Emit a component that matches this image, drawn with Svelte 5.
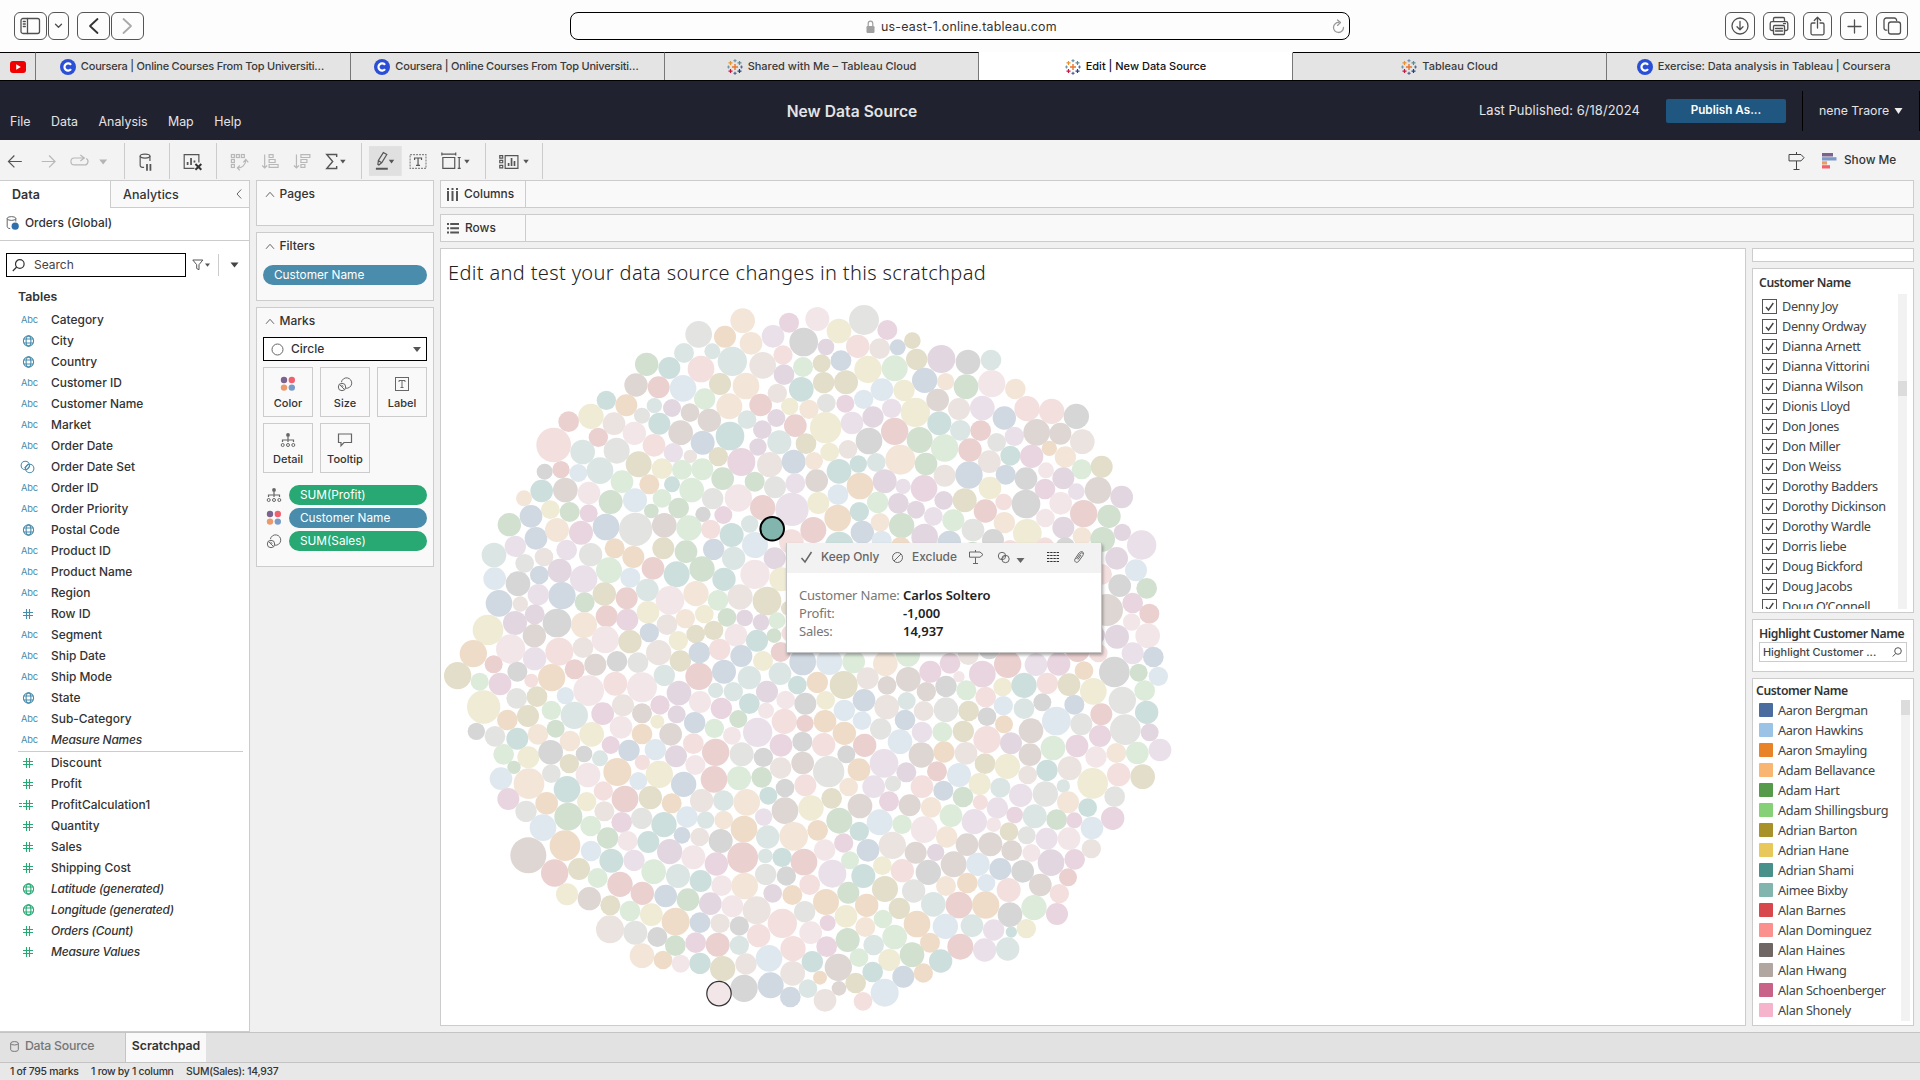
<script>
  const palette = {
    a: '#d0d8e2', b: '#e0e8ef', c: '#efdcc8', d: '#f3e6d9', e: '#d1e0cf', f: '#dcebda',
    g: '#e3dec9', h: '#efebd5', i: '#cddfdd', j: '#dbe6e4', k: '#ebd0d0', l: '#f4dfdf',
    m: '#d7d6d7', n: '#e3e3e1', o: '#e9d5df', p: '#f3e6e9', q: '#e2d7e0', r: '#eae0e9',
    s: '#ded6d3', t: '#ebe3e0'
  };

  // Bubble marks by quadrant, "x,y,radius+colour" in thirds of a pixel from the quadrant origin.
  const quadrants = [
    { ox: 440, oy: 290, marks: `908,92,37d 1047,98,30o 776,133,40n 855,140,33c 933,160,34d 999,139,34r 1091,156,43m 732,189,30j 817,184,24j 620,223,35e 688,234,33i 783,237,40l 877,214,44j 968,226,40t 1029,195,29l 1089,231,30f 588,285,35s 656,292,33k 729,295,40b 840,282,33g 918,288,40d 1032,254,31q 499,331,29i 559,346,33c 453,379,38h 386,395,31k 643,347,23j 696,354,27q 794,327,32f 868,349,39d 962,345,34k 1012,310,29t 1084,298,37i 1049,349,26h 606,377,24n 522,401,34t 658,401,33i 750,368,28s 808,391,35s 921,389,28j 1009,384,27q 1066,407,34k 475,442,29k 583,430,35p 722,428,37s 788,458,36a 870,438,43i 967,419,28q 1018,457,36j 1098,461,31g 341,465,52l 428,486,37j 530,482,39n 642,466,34l 700,488,29r 751,499,20t 835,500,29g 904,516,42o 954,471,26q 989,524,38t 1061,515,36a 314,545,24m 363,539,26k 415,549,27b 480,542,40j 596,523,39g 666,536,31h 726,539,30f 787,538,33f 546,575,34f 628,583,30c 696,583,24i 755,600,37f 848,566,34e 944,575,30e 1005,592,33n 1066,580,30r 305,603,34i 376,600,37s 447,609,34p 512,636,36e 585,631,36b 666,625,28f 818,626,32n 895,624,41p 252,625,24d 331,659,28h 389,666,30e 446,670,27o 634,663,22e 716,654,31e 789,673,23m 850,675,27o 968,653,38k 1056,658,50r 273,679,34a 208,704,35e 288,745,34a 351,720,36d 423,728,36o 498,711,40a 587,718,50n 673,706,37s 747,714,38f 812,718,29l 875,735,36i 929,702,26j 1054,755,37l 1120,720,39k 226,769,32r 162,795,37j 380,780,31r 452,794,35n 524,775,30c 580,801,33c 670,775,33g 738,785,34e 821,778,32a 945,765,39b 881,805,35j 1004,805,33q 312,801,28t 254,820,28n 164,866,34b 298,855,28a 359,842,36q 507,841,39f 571,863,30b 639,835,34k 710,853,39i 786,837,38e 852,868,35i 945,853,44p 1024,868,36h 234,881,37m 431,867,41r 366,917,41a 295,914,32r 493,912,35g 560,925,33k 622,900,34j 690,931,43p 768,911,38d 834,931,31f 900,921,38t 981,933,43g 177,940,40a 241,942,23t 434,937,30e 284,973,30q 225,999,36q 351,999,43m 144,1020,46h 432,1005,39d 500,979,33k 562,989,33o 624,967,34h 681,1004,31t 736,986,29d 793,972,28h 861,982,28e 914,984,25q 963,997,25q 1011,992,25f 1045,955,22g 283,1037,35s 212,1077,44p 358,1085,42l 429,1073,31t 496,1049,41p 570,1055,35g 628,1028,29a 715,1052,29h 767,1032,28g 821,1021,29g 888,1036,34p 951,1052,33i 1002,1037,22e 1048,1030,24l` },
    { ox: 800, oy: 290, marks: `52,87,36p 192,90,45n 117,123,37h 262,120,30o 337,152,25g 78,171,25q 173,169,35l 239,176,31t 293,172,24a 65,220,27g 123,212,31a 204,238,41h 284,235,39f 350,208,32g 424,207,42q 504,216,37m 573,210,31j 71,278,32g 138,277,36g 374,271,38a 437,275,26d 498,290,37e 575,281,41p 646,297,31d 246,299,34b 312,301,32h 79,339,28n 136,341,27o 191,328,29b 275,355,29r 346,367,44h 413,330,34s 477,357,33t 547,354,37r 613,384,35a 681,356,38l 755,364,38l 829,379,38m 27,358,29d 77,413,47h 156,399,34r 219,381,32q 284,424,41k 418,400,36i 207,453,40m 359,450,39e 481,421,31j 542,422,31k 643,439,29r 710,427,40s 781,431,33s 847,455,37t 89,486,28h 144,478,28t 434,474,41f 590,457,28n 510,480,35k 631,497,30i 695,499,35o 748,475,23c 796,501,32d 42,513,27d 117,544,37i 175,522,26i 229,517,28j 301,509,45d 378,522,34e 568,515,34t 845,538,30f 905,530,33g 50,572,34s 180,588,40c 254,574,36q 434,557,33t 507,555,41a 617,554,30a 678,566,34m 738,541,24p 790,565,33q 114,614,31b 309,589,23r 372,595,40o 570,594,34h 735,597,31o 829,605,25r 894,601,40s 965,621,34q 55,639,33h 233,637,32f 295,640,31q 431,631,28q 494,631,36g 611,636,25l 678,642,43m 782,640,34p 113,684,40c 178,665,29i 348,659,27q 400,679,28r 556,663,35k 851,671,41k 927,679,35e 187,727,35a 240,697,28d 305,707,38e 374,741,40q 460,691,33f 519,720,34n 613,698,32d 682,730,43h 736,684,28p 790,713,33q 846,739,28d 908,748,37e 967,727,26q 1025,765,44r 118,768,43i 245,752,30b 302,770,30c 448,757,35a 579,750,33m 735,770,28l 796,772,30m 518,785,30e 630,780,30l 950,805,34q 1008,841,33b 905,853,31l 959,887,34m 1040,895,31e 921,960,48s 998,939,31o 1048,971,30k 995,996,26p 1043,1037,37p 951,1040,36q 887,1035,28q` },
    { ox: 440, oy: 650, marks: `100,11,41c 161,43,27k 284,26,35r 335,83,41c 404,58,30k 466,44,33s 531,34,31m 594,38,31n 656,8,38t 721,33,32g 778,8,32a 839,-2,32l 904,18,33a 969,33,30h 1022,6,30k 1088,36,40a 53,77,41g 119,95,27f 180,102,34o 232,65,30m 274,92,21l 526,101,36l 446,122,46p 606,112,45p 673,76,32j 777,79,41k 852,65,36a 928,83,35j 1020,71,34j 1072,105,28i 1132,97,32c 131,171,50h 230,145,31n 291,140,31g 376,137,26b 717,129,37q 827,121,23j 880,125,29j 981,125,33q 780,156,33p 844,175,32o 928,161,31i 1037,150,28p 1096,161,33m 202,210,31c 264,198,33g 334,181,29f 403,196,41j 488,191,34o 549,166,33t 606,190,30s 660,165,29o 710,193,27q 764,218,32a 895,207,27e 978,182,24p 1033,214,38l 1095,220,26k 109,244,26m 165,259,31n 232,266,33i 294,253,31d 347,236,27e 390,273,31d 455,253,37h 543,232,34p 652,215,21h 606,252,31c 692,253,34s 823,235,29f 876,257,27p 953,247,44r 1023,286,34o 1087,275,30m 191,313,31f 265,322,33h 332,307,37m 432,312,25m 512,285,27o 567,301,32a 646,299,32b 760,281,31l 827,307,41k 905,313,36n 970,322,29m 388,341,29g 480,325,24j 222,352,20e 334,371,28n 444,375,37p 532,366,42c 607,337,23l 708,319,33q 766,345,30p 1022,354,32t 1088,339,34s 183,386,34b 267,401,46d 381,418,40i 595,393,27b 658,373,41h 731,403,38a 822,388,40k 897,385,36f 965,382,31e 1035,414,28m 1096,406,33l 205,447,33o 320,460,34c 258,484,32n 440,455,29h 490,423,29l 555,447,40k 631,443,35g 695,460,30c 785,452,35t 850,452,31j 920,457,40d 985,437,27i 1035,482,40s 1113,474,38h 385,500,42e 493,484,30t 452,528,31f 309,533,40b 545,517,31o 605,505,32n 672,524,38i 741,501,32b 797,510,26j 851,510,28d 971,501,26r 912,537,40c 503,564,32e 375,587,46c 563,573,30p 625,576,33i 726,556,25a 779,561,28t 842,573,36m 983,561,35j 1061,559,43d 1133,541,31c 265,616,54s 453,603,31b 514,632,36i 582,631,32r 689,605,38q 760,622,36p 829,642,35o 908,623,46k 976,618,22j 1026,622,29i 1092,636,40k 344,669,41k 417,657,33g 473,684,30f 641,665,37f 714,678,36j 782,693,33i 977,673,32n 1039,678,29m 540,703,38k 845,707,31p 914,708,40d 1109,704,31l 381,733,33h 448,746,35s 607,730,35k 677,738,34a 744,749,34e 811,761,34q 998,730,28q 1057,735,30c 511,766,30g 570,783,31f 634,794,34h 877,769,33p 950,781,42t 1094,785,32n 707,815,42c 780,818,31a 840,820,29t 898,828,29m 510,838,42t 586,848,36n 1027,820,44l 652,861,30m 956,857,35l 1112,848,34p 706,887,31e 767,878,31o 833,884,36k 898,886,29j 606,917,37d 669,930,28c 722,941,27p 780,940,32i 918,942,32t 987,925,40b 1059,896,38l 848,956,38g 1058,970,37t 1117,935,32i 912,1015,41m 992,1006,39a 1051,1041,31a 1104,1016,28j` },
    { ox: 800, oy: 650, marks: `88,36,39b 161,36,34f 256,41,37d 324,14,36f 391,65,33o 450,40,31o 505,14,31t 568,-5,33m 477,80,17p 547,72,40o 623,43,41k 708,44,34r 776,42,35o 833,0,36k 895,9,28l 852,62,28c 943,66,46m 998,10,33r 1060,21,31a 1016,68,27e 1075,79,29b 131,105,42g 203,85,33t 325,88,37s 261,106,28s 438,109,32m 379,125,29s 499,121,30f 557,141,31l 608,111,28h 672,106,38i 742,100,32l 807,104,34g 880,124,40h 1034,122,31f 967,151,41n 77,151,28h 192,151,34a 133,181,32b 260,171,37t 320,153,27j 371,183,30t 438,179,37n 506,183,31g 610,167,29b 672,176,31j 727,157,27m 823,164,30a 904,193,33k 1040,187,35i 75,214,34c 186,212,28b 242,237,32n 315,210,31a 366,246,31r 427,246,30f 490,244,32g 561,200,28m 612,223,27c 693,242,37s 769,213,43b 844,223,33n 976,239,46n 1049,247,27q 133,250,35c 71,284,35l 300,275,37b 194,286,35k 139,313,27m 364,315,38s 432,306,32c 498,310,34t 561,269,41l 633,280,33q 759,294,37f 690,314,34s 831,288,34o 900,258,33o 888,321,32p 949,309,30d 1012,309,34f 1080,300,34r 86,365,47n 177,359,34c 252,340,43r 319,367,30q 411,364,30k 477,375,36b 555,341,31g 622,349,38h 683,375,28t 741,361,32i 809,355,36t 1028,380,37g 956,374,35l 878,400,46h 146,411,28d 221,410,34r 279,401,24n 366,410,34l 430,422,30a 539,402,33h 601,413,30j 790,408,20j 95,445,31g 180,468,37s 267,454,30o 329,466,33s 393,472,31d 489,441,31e 662,436,35r 736,432,38n 541,457,23l 592,474,32r 804,457,33d 863,473,28i 944,440,31n 118,512,39e 239,517,39b 306,523,29f 453,497,34f 523,515,38r 372,539,40p 644,495,25o 704,499,36j 770,509,31e 823,511,24o 938,505,35o 581,524,22p 876,534,34b 178,544,29i 627,545,28g 440,561,32d 680,556,27n 740,566,33r 807,566,34p 131,579,29o 74,600,32p 277,586,41t 204,601,34a 347,608,33s 501,584,34s 571,583,36s 635,602,31s 694,609,27p 407,607,26q 874,596,29t 150,631,27f 247,647,28h 97,671,42r 461,643,39s 534,643,35b 601,657,33a 753,638,40q 824,628,31o 190,678,36i 307,662,35l 385,667,38m 668,664,34m 804,682,27k 255,717,39g 145,728,33e 341,723,35n 438,708,30d 502,699,31c 559,699,27b 626,720,36l 721,705,34s 778,731,29l 78,756,39c 200,766,35c 298,775,32g 400,763,37j 477,765,40k 557,765,41c 630,794,37m 702,773,38f 771,792,33o 138,799,34h 249,807,28f 83,819,24o 196,831,30d 351,822,40c 436,829,38b 516,827,34j 581,840,32r 634,846,17i 679,836,29h 143,870,36e 80,890,31o 221,885,31j 284,861,37f 390,878,30c 481,890,39k 554,900,35r 623,897,35j 336,914,37e 177,923,28f 268,930,33h 422,933,35i 115,952,41s 218,966,31i 310,980,33a 370,969,29c 60,983,21c 167,999,31g 254,1028,42b 117,1015,22s 75,1051,34t 189,1054,28l` }
  ];
  const bubbles = quadrants.flatMap(({ ox, oy, marks }) =>
    marks.split(' ').map((m) => {
      const [x, y, rc] = m.split(',');
      return { x: ox + x / 3, y: oy + y / 3, r: parseInt(rc) / 3, c: palette[rc.slice(-1)] };
    })
  );

  const tabs = [
    ['coursera', 'Coursera | Online Courses From Top Universiti…', 315],
    ['coursera', 'Coursera | Online Courses From Top Universiti…', 314],
    ['tableau', 'Shared with Me – Tableau Cloud', 314],
    ['tableau', 'Edit | New Data Source', 314, true],
    ['tableau', 'Tableau Cloud', 314],
    ['coursera', 'Exercise: Data analysis in Tableau | Coursera', 314]
  ];

  const dimensions = [
    ['abc', 'Category'], ['globe', 'City'], ['globe', 'Country'], ['abc', 'Customer ID'],
    ['abc', 'Customer Name'], ['abc', 'Market'], ['abc', 'Order Date'], ['set', 'Order Date Set'],
    ['abc', 'Order ID'], ['abc', 'Order Priority'], ['globe', 'Postal Code'], ['abc', 'Product ID'],
    ['abc', 'Product Name'], ['abc', 'Region'], ['num', 'Row ID'], ['abc', 'Segment'],
    ['abc', 'Ship Date'], ['abc', 'Ship Mode'], ['globe', 'State'], ['abc', 'Sub-Category'],
    ['abc', 'Measure Names', true]
  ];
  const measures = [
    ['num', 'Discount'], ['num', 'Profit'], ['calc', 'ProfitCalculation1'], ['num', 'Quantity'],
    ['num', 'Sales'], ['num', 'Shipping Cost'], ['globe', 'Latitude (generated)', true],
    ['globe', 'Longitude (generated)', true], ['num', 'Orders (Count)', true],
    ['num', 'Measure Values', true]
  ];

  const names = [
    'Denny Joy', 'Denny Ordway', 'Dianna Arnett', 'Dianna Vittorini', 'Dianna Wilson',
    'Dionis Lloyd', 'Don Jones', 'Don Miller', 'Don Weiss', 'Dorothy Badders',
    'Dorothy Dickinson', 'Dorothy Wardle', 'Dorris liebe', 'Doug Bickford', 'Doug Jacobs',
    'Doug O’Connell'
  ];
  const legend = [
    ['#4a6c9f', 'Aaron Bergman'], ['#9bc3e6', 'Aaron Hawkins'], ['#e98328', 'Aaron Smayling'],
    ['#f9b673', 'Adam Bellavance'], ['#569b49', 'Adam Hart'], ['#86d077', 'Adam Shillingsburg'],
    ['#a89128', 'Adrian Barton'], ['#e9c85b', 'Adrian Hane'], ['#48908a', 'Adrian Shami'],
    ['#82b5ad', 'Aimee Bixby'], ['#d8474b', 'Alan Barnes'], ['#fa918e', 'Alan Dominguez'],
    ['#706663', 'Alan Haines'], ['#b2a6a1', 'Alan Hwang'], ['#c96289', 'Alan Schoenberger'],
    ['#f5b4cb', 'Alan Shonely']
  ];
</script>

{#snippet chevronUp()}
  <svg class="chev" width="10" height="8" viewBox="0 0 10 8"><path d="M1 6.800 5 2.300 9 6.800" /></svg>
{/snippet}

{#snippet fieldIcon(kind)}
  {#if kind === 'abc'}
    <span class="abc">Abc</span>
  {:else}
    <svg class="ficon" width="18" height="14" viewBox="0 0 18 14">
      {#if kind === 'globe'}
        <circle cx="9.500" cy="7" r="5.100" /><ellipse cx="9.500" cy="7" rx="2.400" ry="5.100" /><path d="M4.700 5h9.600M4.700 9h9.600" />
      {:else if kind === 'set'}
        <circle cx="6.300" cy="5.500" r="4.200" /><circle cx="10.700" cy="8.500" r="4.200" /><path d="M5.500 8.200 9.500 4M7.300 10l3.600-4" />
      {:else}
        <path d="M7.500 2v10M10.500 2v10M4 5.500h10M4 8.500h10" />
        {#if kind === 'calc'}<path d="M0 5.500h3M0 8.500h3" />{/if}
      {/if}
    </svg>
  {/if}
{/snippet}

{#snippet colorDots()}
  <svg width="16" height="16" viewBox="0 0 16 16">
    <circle cx="4" cy="4" r="3.200" fill="#7b6390" /><circle cx="11.800" cy="4" r="3.200" fill="#f2606e" />
    <circle cx="4" cy="11.600" r="3.200" fill="#eb9a6b" /><circle cx="11.800" cy="11.600" r="3.200" fill="#7a9bc8" />
  </svg>
{/snippet}
{#snippet sizeIcon()}
  <svg class="ln" width="16" height="16" viewBox="0 0 16 16">
    <path d="M4.400 6.200a5.200 5.200 0 1 1 4.400 6" /><circle cx="5" cy="11" r="3.700" /><path d="M2.600 8.700 7.400 13.400M4.500 8.800l1.700 2" />
  </svg>
{/snippet}
{#snippet detailIcon()}
  <svg class="ln" width="16" height="16" viewBox="0 0 16 16">
    <circle cx="8" cy="3" r="1.900" fill="#666" stroke="none" /><path d="M8 5v5M2.500 10V8h11v2" stroke-width="1.200" />
    <circle cx="2.700" cy="13" r="1.500" /><circle cx="8" cy="13" r="1.500" /><circle cx="13.300" cy="13" r="1.500" />
  </svg>
{/snippet}

<div class="app">
  <header class="browser">
    <div class="nav">
      <span class="btn w33">
        <svg width="21" height="18" viewBox="0 0 21 18"><rect x="1" y="1.500" width="18.500" height="15" rx="2" /><path d="M7.500 1.500v15M3.300 4.500h2M3.300 7h2M3.300 9.500h2" /></svg>
      </span>
      <span class="btn w21"><svg width="9" height="6" viewBox="0 0 9 6"><path d="M1.500 1.200 4.500 4.300l3-3.100" /></svg></span>
      <span class="btn w33 back"><svg class="bold" width="11" height="18" viewBox="0 0 11 18"><path d="M9.500 2 2 9l7.500 7" /></svg></span>
      <span class="btn w33"><svg class="bold dim" width="11" height="18" viewBox="0 0 11 18"><path d="M1.500 2 9 9l-7.500 7" /></svg></span>
    </div>
    <div class="url">
      <svg width="9" height="14" viewBox="0 0 9 14"><rect x="0.500" y="6" width="8" height="7" rx="1.200" fill="#a0a0a0" /><path d="M2.200 6V3.700a2.300 2.600 0 0 1 4.600 0V6" fill="none" stroke="#a0a0a0" stroke-width="1.200" /></svg>
      <span>us-east-1.online.tableau.com</span>
      <svg class="reload" width="13" height="16" viewBox="0 0 13 16"><path d="M7 3.500a5 5 0 1 0 4.500 5" /><path d="m5.500 1 3 2.600-3 2.800" /></svg>
    </div>
    <div class="tools">
      <span class="btn w30"><svg width="18" height="18" viewBox="0 0 18 18"><circle cx="9" cy="9" r="8" /><path d="M9 4.500v8M6 9.800l3 3 3-3" /></svg></span>
      <span class="btn w32"><svg width="20" height="20" viewBox="0 0 20 20"><path d="M4.500 14.500H3a1.800 1.800 0 0 1-1.800-1.800V7.500A1.800 1.800 0 0 1 3 5.700h14a1.800 1.800 0 0 1 1.800 1.800v5.200a1.800 1.800 0 0 1-1.800 1.800h-1.500M4.500 5.500V2.800A1.300 1.300 0 0 1 5.800 1.500h8.400a1.300 1.300 0 0 1 1.300 1.300v2.700" /><rect x="4.500" y="9.500" width="11" height="9" rx="1" /><path d="M6.500 12.500h7M6.500 15h7M14.500 7.600h2" /></svg></span>
      <span class="btn w29"><svg width="17" height="20" viewBox="0 0 17 20"><path d="M6 7H3.500A1.500 1.500 0 0 0 2 8.500v8.800a1.500 1.500 0 0 0 1.500 1.500h10a1.500 1.500 0 0 0 1.500-1.500V8.500A1.500 1.500 0 0 0 13.500 7H11M8.500 12V1.500M5.300 4.500l3.200-3.200 3.200 3.200" /></svg></span>
      <span class="btn w28"><svg width="15" height="15" viewBox="0 0 15 15"><path d="M7.500 1v13M1 7.500h13" /></svg></span>
      <span class="btn w32"><svg width="19" height="18" viewBox="0 0 19 18"><rect x="5.500" y="5" width="12" height="12" rx="2.300" /><path d="M3.800 13.200h-.5A2.300 2.300 0 0 1 1 10.900V3.300A2.300 2.300 0 0 1 3.300 1h8a2.300 2.300 0 0 1 2.300 2.300v.2" /></svg></span>
    </div>
  </header>

  <nav class="tabs">
    <div class="tab pinned">
      <svg width="16" height="12" viewBox="0 0 16 12"><rect width="16" height="12" rx="3" fill="#f00000" /><path d="M6.200 3.300v5.400L10.800 6z" fill="#fff" /></svg>
    </div>
    {#each tabs as [icon, label, width, active]}
      <div class="tab {icon}" class:active class:clipped={label.endsWith('…')} style:width="{width}px">
        {#if icon === 'coursera'}
          <svg width="16" height="16" viewBox="0 0 16 16"><circle cx="8" cy="8" r="8" fill="#2a4fd6" /><path d="M11 5.900a3.600 3.600 0 1 0 0 4.200" fill="none" stroke="#fff" stroke-width="2.200" /></svg>
        {:else}
          <svg width="16" height="16" viewBox="0 0 16 16" fill="none" stroke-width="1.200">
            <path d="M8 5v6M5 8h6" stroke="#e8762d" stroke-width="1.400" />
            <path d="M3.500 1.900v4M1.500 3.900h4" stroke="#eb9129" /><path d="M12.500 1.900v4M10.500 3.900h4" stroke="#5c8a92" />
            <path d="M3.500 10.100v4M1.500 12.100h4" stroke="#c9143f" /><path d="M12.500 10.100v4M10.500 12.100h4" stroke="#1f457e" />
            <path d="M8 .2v3M6.500 1.700h3M1.500 6.600v2.800M.2 8h2.600" stroke="#6f95ad" /><path d="M14.500 6.600v2.800M13.200 8h2.600M8 12.800v3M6.500 14.300h3" stroke="#59649a" />
          </svg>
        {/if}
        <span>{label}</span>
      </div>
    {/each}
  </nav>

  <section class="header">
    <div class="menu"><span>File</span><span>Data</span><span>Analysis</span><span>Map</span><span>Help</span></div>
    <h1>New Data Source</h1>
    <div class="account">
      <span class="pub">Last Published: 6/18/2024</span>
      <button>Publish As...</button>
      <span class="user">nene Traore <svg width="9" height="7" viewBox="0 0 9 7"><path d="M.5 0h8L4.500 6z" fill="#eee" /></svg></span>
    </div>
  </section>

  <section class="toolbar">
    <svg class="grp" width="125" height="36" viewBox="0 142 125 36">
      <g class="dk"><path d="M22 160.500H9M14.500 154.500l-6 6 6 6" /></g>
      <g class="lt"><path d="M42 160.500h13M49.500 154.500l6 6-6 6" /><path d="M84 157h-9a3.500 3.500 0 0 0-3.500 3.500A3.500 3.500 0 0 0 75 164h10a3.500 3.500 0 0 0 2-6.500M81 154l4 3-4 3" /><path d="M100 158.500h8l-4 5z" fill="#b5b5b5" stroke="none" /></g>
    </svg>
    <svg class="grp" width="45" height="36" viewBox="125 142 45 36">
      <g class="dk"><ellipse cx="145.500" cy="155" rx="5" ry="2" /><path d="M140.500 155v9.500c0 1.300 2 2 4 2M150.500 155v5" /><path d="M147.500 163v7M151 163v7" stroke-width="1.800" /></g>
    </svg>
    <svg class="grp" width="47" height="36" viewBox="170 142 47 36">
      <g class="dk"><path d="M195 167.500h-10.500v-14H199.500v8" /><path d="M188 164v-3M191.500 164v-7M195 161.500v-2" stroke-width="1.800" /><path d="m196 163 6 6M202 163l-6 6" stroke="#333" stroke-width="2" /></g>
    </svg>
    <svg class="grp" width="145" height="36" viewBox="217 142 145 36">
      <g class="lt"><rect x="231.500" y="153.500" width="3" height="3" /><rect x="236.500" y="153.500" width="3" height="3" /><rect x="241.500" y="153.500" width="3" height="3" /><rect x="231.500" y="158.500" width="3" height="3" /><rect x="231.500" y="163.500" width="3" height="3" />
        <path d="M238 167c4 0 8-3 8-8M243.500 161.500l2.500-3 2.500 3M240 164.500l-2.500 2.500 2.500 2.500" />
        <path d="M265 153.500V167M262.500 164.500 265 167l2.500-2.500M269.500 153.500h4v3h-4zM269.500 158.500h6v3h-6zM269.500 163.500h9v3h-9z" />
        <path d="M297 153.500V167M294.500 164.500 297 167l2.500-2.500M301.500 153.500h9v3h-9zM301.500 158.500h6v3h-6zM301.500 163.500h4v3h-4z" /></g>
      <g class="dk"><path d="M337.500 156v-2.500h-10l6 7-6 7h10V165" stroke-width="1.400" /><path d="M341 158.800h5.500l-2.750 3.700z" fill="#555" stroke="none" /></g>
    </svg>
    <svg class="grp" width="124" height="36" viewBox="362 142 124 36">
      <rect x="369" y="145" width="33" height="30" fill="#e0e0e0" />
      <g class="dk"><path d="M376 167.800h12" stroke-width="2" /><path d="m378 163.500.5-4 5-8 3.500 2-5 8-3 2.500zM378.500 159.500l3.500 2.500" /><path d="M389 158.800h5.500l-2.750 3.700z" fill="#555" stroke="none" />
        <rect x="410.500" y="153.500" width="16" height="14" stroke-dasharray="2 1" stroke="#888" /><path d="M415 159v-2h7v2M418.500 157v7.500M416.500 164.500h4" stroke-width="1.200" />
        <path d="M443.500 156.500h12v11h-12zM442.500 151.500v3M456.500 151.500v3M442.500 153h14M458.500 156.500h3M458.500 167.500h3M460 156.500v11" /><path d="M465 158.800h5.500l-2.750 3.700z" fill="#555" stroke="none" /></g>
    </svg>
    <svg class="grp" width="57" height="36" viewBox="486 142 57 36">
      <g class="dk"><path d="M500 154.500h3v2.500h-3zM500 159.300h3v2.500h-3zM500 164.500h3v2.500h-3zM505.500 154.500h13v13h-13z" /><path d="M509 165v-3M512 165v-8M515 165v-5" stroke-width="1.700" /><path d="M524 158.800h5.500l-2.750 3.700z" fill="#555" stroke="none" /></g>
    </svg>
    <div class="showme">
      <svg width="20" height="20" viewBox="0 0 20 20" class="ln"><path d="M2 3.500h12l3 3.200-3 3.200H2zM9.500 1v2.500M9.500 10v8.500M6.500 18.500h6" stroke="#444" /></svg>
      <svg width="15" height="16" viewBox="0 0 15 16"><path d="M0 0h11v3.500H0z" fill="#7b6390" /><path d="M0 4.200h14.500v3.300H0z" fill="#7a9bc8" /><path d="M0 8.300h5v3.200H0z" fill="#eb9a6b" /><path d="M0 12.200h8v3.300H0z" fill="#f2606e" /></svg>
      <b>Show Me</b>
    </div>
  </section>

  <main>
    <aside class="data">
      <div class="ptabs">
        <span class="on">Data</span>
        <span class="off">Analytics<svg width="6" height="10" viewBox="0 0 6 10"><path d="M5.200.500 1 5l4.200 4.500" /></svg></span>
      </div>
      <div class="source">
        <svg width="14" height="14" viewBox="0 0 14 14" fill="none" stroke="#666"><ellipse cx="5.500" cy="2.500" rx="4.300" ry="1.900" /><path d="M1.200 2.500v8.200c0 1 1.300 1.800 3 1.900M9.800 2.500v3" /><circle cx="9.200" cy="10.200" r="3.600" fill="#2f6fab" stroke="none" /></svg>
        Orders (Global)
      </div>
      <div class="searchrow">
        <div class="search">
          <svg width="13" height="13" viewBox="0 0 13 13"><circle cx="7.800" cy="5" r="4.300" /><path d="M4.700 8 .8 12" /></svg>
          Search
        </div>
        <svg class="funnel" width="18" height="12" viewBox="0 0 18 12"><path d="M.8 1h10L7 5.700v5L4.700 9.500V5.700z" fill="none" stroke="#555" /><path d="M13 4.500h5l-2.500 3.200z" fill="#555" /></svg>
        <i></i>
        <svg width="9" height="6" viewBox="0 0 9 6"><path d="M.5.500h8L4.500 5.500z" fill="#444" /></svg>
      </div>
      <h3>Tables</h3>
      <ul class="dims">
        {#each dimensions as [kind, name, italic]}
          <li class:italic>{@render fieldIcon(kind)}<span class="nm">{name}</span></li>
        {/each}
      </ul>
      <ul class="meas">
        {#each measures as [kind, name, italic]}
          <li class:italic>{@render fieldIcon(kind)}<span class="nm">{name}</span></li>
        {/each}
      </ul>
    </aside>

    <div class="shelves">
      <div class="card pages"><h4>{@render chevronUp()}Pages</h4></div>
      <div class="card filters"><h4>{@render chevronUp()}Filters</h4><div class="pill blue">Customer Name</div></div>
      <div class="card marks">
        <h4>{@render chevronUp()}Marks</h4>
        <div class="select">
          <svg width="13" height="13" viewBox="0 0 13 13"><circle cx="6.500" cy="6.500" r="5.500" fill="none" stroke="#666" /></svg>
          Circle
          <svg class="dd" width="8" height="5" viewBox="0 0 8 5"><path d="M0 0h8L4 5z" fill="#555" /></svg>
        </div>
        <div class="props">
          <span>{@render colorDots()}Color</span>
          <span>{@render sizeIcon()}Size</span>
          <span><svg class="ln" width="16" height="16" viewBox="0 0 16 16"><rect x="1.500" y="1.500" width="13" height="13" /><path d="M5 6V4.500h6V6M8 4.500v7M6.500 11.500h3" /></svg>Label</span>
          <span>{@render detailIcon()}Detail</span>
          <span><svg class="ln" width="16" height="16" viewBox="0 0 16 16"><path d="M1.500 2h13v8.500H7L4 13.700v-3.200H1.500z" stroke-width="1.200" /></svg>Tooltip</span>
        </div>
        <div class="enc">{@render detailIcon()}<div class="pill green">SUM(Profit)</div></div>
        <div class="enc">{@render colorDots()}<div class="pill blue">Customer Name</div></div>
        <div class="enc">{@render sizeIcon()}<div class="pill green">SUM(Sales)</div></div>
      </div>
    </div>

    <div class="work">
      <div class="shelf">
        <span><svg width="11" height="13" viewBox="0 0 11 13" fill="#555"><path d="M0 0h2v2H0zM4.500 0h2v2h-2zM9 0h2v2H9zM0 3h2v10H0zM4.500 3h2v10h-2zM9 3h2v10H9z" /></svg>Columns</span>
      </div>
      <div class="shelf">
        <span><svg width="12" height="11" viewBox="0 0 12 11" fill="#555"><path d="M0 0h2v2H0zM0 4.300h2v2H0zM0 8.600h2v2H0zM3.200 0H12v2H3.200zM3.200 4.300H12v2H3.200zM3.200 8.600H12v2H3.200z" /></svg>Rows</span>
      </div>
      <div class="lower">
        <div class="view">
          <h2>Edit and test your data source changes in this scratchpad</h2>
          <svg class="plot" width="740" height="734" viewBox="441 290 740 734">
            {#each bubbles as b}<circle cx={b.x} cy={b.y} r={b.r} fill={b.c} />{/each}
            <circle cx="719" cy="993.600" r="12.200" fill="#f3e6e9" stroke="#333" stroke-width="1.200" />
            <circle cx="772.200" cy="528.800" r="11.800" fill="#82b5ad" stroke="#000" stroke-width="2" />
          </svg>
          <div class="tooltip">
            <div class="cmds">
              <svg width="315" height="31" viewBox="786 543 315 31" class="ln">
                <path d="m801.500 558 3.500 4 6.500-10" stroke-width="1.500" />
                <circle cx="897.500" cy="557.500" r="5" /><path d="m894 561 7-7" />
                <path d="M969.500 552h10.500l3 2.600-3 2.600h-10.500zM975.500 550v2M975.500 557.500v6M973 563.500h5" />
                <circle cx="1002" cy="556" r="3.700" /><circle cx="1005.500" cy="559" r="3.700" /><path d="m1001.500 559 4-4" />
                <path d="M1016.500 558h8l-4 5z" fill="#666" stroke="none" />
                <path d="M1047 552.500h12M1047 555.500h12M1047 558.500h12M1047 561.500h12" stroke-dasharray="2.400 .8" stroke="#333" />
                <path d="m1076.500 559 4-5.500c1.500-1.500 3.500 0 2.500 1.700l-4.500 6.300c-2 2-4.800 0-3.500-2.500l4-6c2-2.200 4.700-1.500 4.500.8M1078 559.500l3-4.500" />
              </svg>
              <span class="keep">Keep Only</span><span class="excl">Exclude</span>
            </div>
            <dl>
              <dt>Customer Name:</dt><dd>Carlos Soltero</dd>
              <dt>Profit:</dt><dd>-1,000</dd>
              <dt>Sales:</dt><dd>14,937</dd>
            </dl>
          </div>
        </div>

        <div class="side">
          <div class="box blank"></div>
          <div class="box filter">
            <h5>Customer Name</h5>
            <div class="flist">
              <ul>
                {#each names as n}
                  <li><svg width="15" height="15" viewBox="0 0 15 15"><rect x=".5" y=".5" width="14" height="14" fill="#fff" stroke="#555" /><path d="m4 8 2.500 3L11.300 4" fill="none" stroke="#444" stroke-width="1.400" /></svg>{n}</li>
                {/each}
              </ul>
              <div class="track"><div class="thumb"></div></div>
            </div>
          </div>
          <div class="box hl">
            <h5>Highlight Customer Name</h5>
            <div class="hinput">Highlight Customer ...
              <svg width="10" height="10" viewBox="0 0 10 10"><circle cx="6" cy="4" r="3.300" /><path d="M3.700 6.500.7 9.500" /></svg>
            </div>
          </div>
          <div class="box legend">
            <h5>Customer Name</h5>
            <div class="flist">
              <ul>
                {#each legend as [color, n]}
                  <li><span class="sw" style:background={color}></span>{n}</li>
                {/each}
              </ul>
              <div class="track"><div class="thumb"></div></div>
            </div>
          </div>
        </div>
      </div>
    </div>
  </main>

  <footer>
    <div class="sheets">
      <span class="ds"><svg width="9" height="11" viewBox="0 0 9 11" fill="none" stroke="#777"><ellipse cx="4.500" cy="2.300" rx="3.800" ry="1.700" /><path d="M.7 2.300v6.500c0 .9 1.700 1.600 3.800 1.600s3.800-.7 3.800-1.600V2.300" /></svg>Data Source</span>
      <span class="sp">Scratchpad</span>
    </div>
    <div class="status"><span>1 of 795 marks</span><span>1 row by 1 column</span><span>SUM(Sales): 14,937</span></div>
  </footer>
</div>

<style>
  :global(body) { margin: 0; overflow: hidden; }
  .app { width: 1920px; height: 1080px; display: flex; flex-direction: column; background: #f0f0f0; font: 500 12px/1 Inter, "Liberation Sans", sans-serif; color: #333; overflow: hidden; white-space: nowrap; }
  .app * { box-sizing: border-box; }
  svg { display: block; flex: none; }
  h1, h2, h3, h4, h5, ul, dl, dd { margin: 0; padding: 0; list-style: none; }

  .browser { height: 52px; flex: none; background: #fdfdfd; display: flex; align-items: flex-start; padding: 12px 12px 0 14px; }
  .nav { display: flex; width: 556px; gap: 1px; }
  .btn { height: 28px; border: 1px solid #555; border-radius: 6px; display: flex; align-items: center; justify-content: center; }
  .btn svg, .reload { fill: none; stroke: #505050; stroke-width: 1.3; stroke-linecap: round; stroke-linejoin: round; }
  .btn svg.bold { stroke: #333; stroke-width: 1.8; }
  .btn svg.dim { stroke: #aaa; }
  .w33 { width: 33px; } .w21 { width: 21px; } .w30 { width: 30px; } .w32 { width: 32px; } .w29 { width: 29px; } .w28 { width: 28px; }
  .back { margin-left: 7px; }
  .url { width: 780px; height: 28px; border: 1px solid #000; border-radius: 8px; display: flex; align-items: center; padding: 1px 4px 0 295px; gap: 6px; font-size: 12.4px; letter-spacing: 0.22px; font-weight: 400; color: #333; }
  .url span { flex: 1; padding-top: 1px; }
  .url .reload { stroke: #999; }
  .tools { margin-left: auto; display: flex; gap: 8px; }

  .tabs { height: 29px; flex: none; display: flex; border-bottom: 1px solid #000; }
  .tab { border-top: 1px solid #000; border-right: 1px solid #777; background: #e4e4e4; display: flex; align-items: center; justify-content: center; gap: 5px; font-size: 11px; color: #3a3a3a; }
  .tab.coursera { letter-spacing: -0.07px; }
  .tab.clipped { letter-spacing: -0.22px; padding-right: 2px; }
  .tab.pinned { width: 36px; padding-right: 0; }
  .tab.active { background: #fff; border-top-color: #fff; color: #111; }
  .tab:last-child { border-right: 0; flex: 1; }

  .header { height: 59px; flex: none; background: #21222f; color: #e4e4e6; display: grid; grid-template-columns: 752px 200px 1fr; }
  .menu { display: flex; gap: 20.5px; padding: 35px 0 0 10px; font-size: 12.4px; font-weight: 400; }
  h1 { font-size: 15.6px; font-weight: 600; line-height: 59px; padding-top: 0.5px; text-align: center; letter-spacing: 0.05px; }
  .account { display: flex; align-items: center; justify-content: flex-end; font-weight: 400; }
  .pub { font-size: 12.9px; letter-spacing: 0.09px; margin-right: 26px; padding-top: 1px; }
  .account button { width: 120px; height: 24px; border: 0; padding: 0 0 1px; border-radius: 2px; background: #1f5780; color: #fff; font: 600 11.7px Inter, sans-serif; margin-right: 16px; }
  .user { border-left: 1px solid #000; border-right: 1px solid #000; height: 40px; width: 118px; padding: 1px 0 0 16px; display: flex; align-items: center; gap: 5px; font-size: 12.3px; }

  .toolbar { height: 40px; flex: none; background: #f3f3f3; display: flex; align-items: center; padding-top: 1px; }
  .grp { border-right: 1px solid #ccc; box-sizing: border-box; }
  .grp g { fill: none; stroke-width: 1.200; }
  .dk { stroke: #555; } .lt { stroke: #b8b8b8; }
  .ln { fill: none; stroke: #666; stroke-width: 1; }
  .showme { margin-left: auto; display: flex; align-items: center; width: 133px; }
  .showme svg + svg { margin-left: 15px; }
  .showme b { margin-left: 7px; font-weight: 500; font-size: 11.8px; padding-top: 1px; }

  main { height: 852px; flex: none; display: flex; }
  .data { width: 250px; height: 852px; border: 1px solid #ccc; border-left: 0; background: #fff; display: flex; flex-direction: column; }
  .ptabs { display: flex; height: 27px; font-size: 12.5px; line-height: 27px; }
  .ptabs .on { width: 110px; padding-left: 12px; font-weight: 600; }
  .ptabs .off { flex: 1; display: flex; align-items: center; justify-content: space-between; padding: 0 7px 0 12px; border-left: 1px solid #ccc; border-bottom: 1px solid #ccc; background: #f9f9f9; letter-spacing: 0.05px; }
  .ptabs svg { fill: none; stroke: #666; }
  .source { height: 33px; border-bottom: 1px solid #ccc; display: flex; align-items: center; padding: 0 0 3px 6px; gap: 5px; font-size: 11.9px; }
  .searchrow { display: flex; align-items: center; margin: 12px 0 0 6px; height: 24px; }
  .search { width: 180px; height: 24px; border: 1px solid #000; display: flex; align-items: center; padding-left: 5px; gap: 9px; font-size: 12px; font-weight: 400; color: #444; }
  .search svg { fill: none; stroke: #333; stroke-width: 1.200; }
  .funnel { margin-left: 6px; }
  .searchrow i { width: 1px; height: 22px; background: #ccc; margin: 0 11px 0 8px; }
  h3 { font-size: 12.3px; font-weight: 600; padding-left: 18px; margin-top: 13px; line-height: 13px; }
  .dims { margin: 6px 6px 0 18px; border-bottom: 1px solid #ccc; padding-bottom: 1px; }
  .meas { margin: 0 6px 0 18px; }
  .data li { height: 21px; display: flex; align-items: center; font-size: 11.95px; }
  .dims { --ic: #4a8cab; } .meas { --ic: #28a974; }
  .abc { width: 33px; padding-left: 3px; font: 400 9.3px Inter, sans-serif; letter-spacing: -0.2px; color: var(--ic); }
  .ficon { fill: none; stroke: var(--ic); stroke-width: 1.100; margin: 0 14px 0 1px; }
  .italic .nm { font-style: italic; letter-spacing: -0.22px; }

  .shelves { width: 178px; margin-left: 6px; display: flex; flex-direction: column; gap: 6px; }
  .card { border: 1px solid #ccc; background: #f9f9f9; padding: 0 6px; }
  .pages { height: 46px; } .filters { height: 69px; } .marks { height: 260px; }
  h4 { font-size: 12px; font-weight: 500; display: flex; align-items: center; gap: 4.5px; height: 26px; padding-left: 2px; }
  .chev { fill: none; stroke: #666; }
  .pill { height: 20px; border-radius: 10px; color: #fff; padding-left: 11px; line-height: 21px; font-size: 11.8px; font-weight: 400; flex: 1; }
  .filters .pill { margin-top: 6px; }
  .blue { background: #4a8cab; } .green { background: #28a974; }
  .select { height: 24px; margin-top: 3px; border: 1px solid #000; background: #fff; display: flex; align-items: center; padding: 0 5px 0 7px; gap: 7px; }
  .select .dd { margin-left: auto; }
  .props { display: grid; grid-template-columns: 50px 50px 50px; gap: 6px 7px; margin: 6px 0 12px; }
  .props span { height: 50px; border: 1px solid #ccc; display: flex; flex-direction: column; align-items: center; padding-top: 8px; gap: 6px; font-size: 11px; }
  .enc { display: flex; align-items: center; margin-bottom: 3px; padding-left: 3px; gap: 7px; height: 20px; }

  .work { width: 1474px; margin-left: 6px; display: flex; flex-direction: column; gap: 6px; }
  .shelf { height: 28px; border: 1px solid #ccc; background: #f9f9f9; }
  .shelf span { display: flex; width: 85px; height: 26px; border-right: 1px solid #ccc; align-items: center; gap: 6px; padding-left: 6px; font-size: 11.9px; }
  .lower { display: flex; gap: 6px; height: 778px; }
  .view { position: relative; width: 1306px; border: 1px solid #ccc; background: #fff; }
  h2 { font: 300 20px/42px "Noto Sans", sans-serif; height: 41px; padding: 3px 0 0 7px; letter-spacing: 0.35px; color: #222; }

  .tooltip { position: absolute; left: 345px; top: 294px; width: 316px; height: 110px; border: 1px solid #c4c4c4; background: #fff; box-shadow: 1px 2px 3px rgba(0,0,0,.35); }
  .cmds { height: 30px; background: #f2f2f2; position: relative; }
  .cmds svg { margin: -1px 0 0 -1px; }
  .cmds span { position: absolute; top: 7px; font-size: 11.9px; color: #666; line-height: 14px; }
  .keep { left: 34px; } .excl { left: 125px; }
  dl { display: grid; grid-template-columns: 104px 1fr; grid-auto-rows: 18px; padding: 13px 0 0 12px; font: 13px/18px "Noto Sans", sans-serif; color: #777; }
  dt { letter-spacing: -0.2px; } dd { font-weight: 600; color: #222; letter-spacing: -0.05px; }

  .side { width: 162px; display: flex; flex-direction: column; gap: 6px; }
  .box { border: 1px solid #ccc; background: #fff; }
  .blank { height: 14px; } .filter { height: 345px; } .hl { height: 53px; } .legend { height: 348px; }
  h5 { font: 600 12.2px/17px "Noto Sans", sans-serif; padding: 5px 0 0 6px; color: #333; letter-spacing: -0.4px; }
  .flist { display: flex; justify-content: space-between; padding-right: 6px; }
  .flist li { display: flex; align-items: center; height: 20px; font: 400 12.7px/20px "Noto Sans", sans-serif; color: #444; gap: 5px; letter-spacing: -0.36px; }
  .filter .flist { height: 315px; margin-top: 3px; overflow: hidden; }
  .filter ul { padding: 2px 0 0 9px; }
  .track { width: 9px; background: #f2f2f2; }
  .thumb { height: 15px; background: #dcdcdc; }
  .filter .thumb { margin-top: 87px; }
  .hl h5 { letter-spacing: -0.45px; }
  .hinput { margin: 0 6px; height: 20px; border: 1px solid #ccc; display: flex; align-items: center; justify-content: space-between; padding: 0 4px 0 3px; font-size: 10.9px; color: #444; }
  .hinput svg { fill: none; stroke: #555; }
  .legend h5 { padding: 3px 0 0 3px; }
  .legend ul { padding-left: 6px; }
  .legend .flist { padding-right: 3px; margin-top: 1px; height: 321px; }
  .legend li { letter-spacing: -0.34px; }
  .sw { width: 14px; height: 14px; border-radius: 1px; }

  footer { flex: 1; }
  .sheets { height: 30px; border-top: 1px solid #c4c4c4; background: #e2e2e2; display: flex; font-size: 12.3px; }
  .ds { width: 126px; border-right: 1px solid #c4c4c4; display: flex; align-items: center; padding: 0 0 3px 10px; gap: 6px; color: #777; letter-spacing: -0.25px; }
  .sp { width: 80px; background: #f9f9f9; font-weight: 600; text-align: center; line-height: 26px; }
  .status { height: 18px; border-top: 1px solid #c4c4c4; background: #e8e8e8; display: flex; gap: 12.5px; padding: 0 0 0 10px; line-height: 17px; font-size: 10.4px; letter-spacing: -0.27px; }
</style>
